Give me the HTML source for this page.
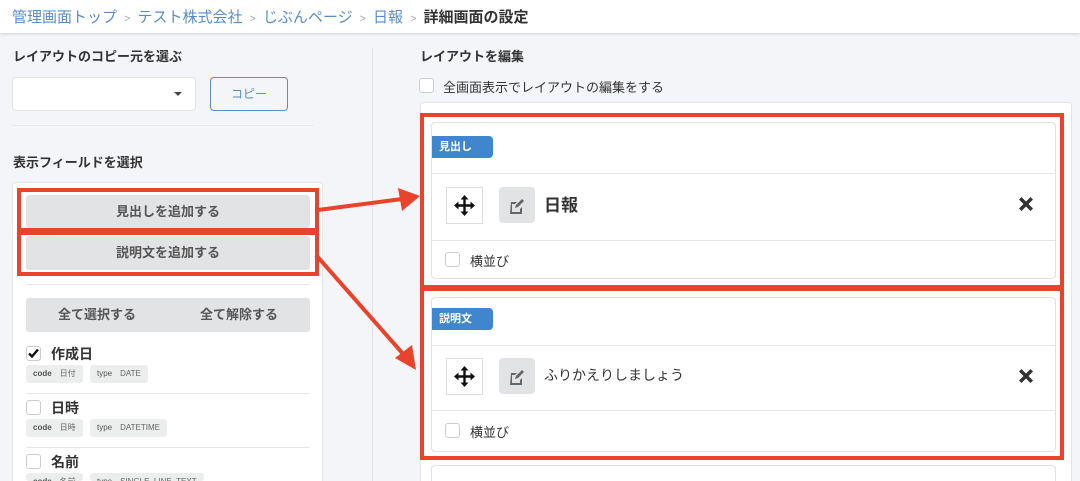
<!DOCTYPE html>
<html style="overflow:hidden;height:481px"><head><meta charset="utf-8">
<style>
*{box-sizing:border-box;margin:0;padding:0}
html,body{overflow:hidden}
body{width:1080px;height:481px;overflow:hidden;background:#f4f5f8;font-family:"Liberation Sans","Noto Sans CJK JP",sans-serif;color:#333;position:relative}
.a{position:absolute}
.hdr{left:0;top:0;width:1080px;height:33px;background:#fff;box-shadow:0 1px 3px rgba(0,0,0,.15)}
.bc{left:12px;top:6px;font-size:15px;color:#5b8cc6;white-space:nowrap}
.bc .s{color:#aaa;font-size:11px;margin:0 7px}
.bc b{color:#333}
.h{font-size:13px;font-weight:bold;color:#333}
.btn{background:#e2e3e5;border-radius:3px;font-size:13px;font-weight:bold;color:#555;text-align:center}
.red{border:4px solid #e8432b}
.cb{width:15px;height:15px;border:1px solid #ccc;border-radius:3px;background:#fff}
.tag{background:#eceded;border-radius:3px;font-size:8px;color:#555;height:18px;line-height:18px;padding:0 7px}
.tag i{font-style:normal;margin-left:8px;color:#666}
.sep{height:1px;background:#e5e6e8}
.card{background:#fff;border:1px solid #e0e0e0;border-radius:4px}
.badge{background:#3f86cc;color:#fff;font-size:11px;font-weight:bold;border-radius:0 4px 4px 0;line-height:22px;padding-left:7px}
.mv{width:37px;height:37px;border:1px solid #ddd;background:#fff}
.ed{width:36px;height:36px;background:#e2e3e5;border-radius:4px}
</style></head><body>
<div class="a hdr"></div>
<div class="a bc">管理画面トップ<span class="s">&gt;</span>テスト株式会社<span class="s">&gt;</span>じぶんページ<span class="s">&gt;</span>日報<span class="s">&gt;</span><b>詳細画面の設定</b></div>

<div class="a h" style="left:13px;top:46px">レイアウトのコピー元を選ぶ</div>
<div class="a" style="left:12px;top:77px;width:184px;height:34px;background:#fff;border:1px solid #e3e3e3;border-radius:4px"></div>
<div class="a" style="left:174px;top:92px;width:0;height:0;border-left:4px solid transparent;border-right:4px solid transparent;border-top:4px solid #444"></div>
<div class="a" style="left:210px;top:77px;width:78px;height:34px;border:1px solid #5b8cc6;border-radius:4px;color:#5b8cc6;font-size:12px;text-align:center;line-height:32px">コピー</div>
<div class="a sep" style="left:12px;top:125px;width:301px"></div>
<div class="a h" style="left:13px;top:152px">表示フィールドを選択</div>
<div class="a" style="left:12px;top:182px;width:311px;height:299px;background:#fff;border:1px solid #e5e5e5;border-bottom:none;border-radius:4px 4px 0 0"></div>
<div class="a btn" style="left:26px;top:195px;width:284px;height:33px;line-height:33px">見出しを追加する</div>
<div class="a btn" style="left:26px;top:236px;width:284px;height:34px;line-height:34px">説明文を追加する</div>
<div class="a red" style="left:17px;top:188px;width:302px;height:44px"></div>
<div class="a red" style="left:17px;top:231px;width:302px;height:45px"></div>
<div class="a sep" style="left:26px;top:284px;width:284px"></div>
<div class="a btn" style="left:26px;top:298px;width:284px;height:34px;line-height:34px;font-size:13px"><span style="position:absolute;left:32px">全て選択する</span><span style="position:absolute;left:174px">全て解除する</span></div>

<div class="a cb" style="left:26px;top:346px"><svg width="13" height="13" viewBox="0 0 13 13" style="position:absolute;left:0;top:0"><path d="M2 6.5l3 3 6-7" stroke="#111" stroke-width="2.4" fill="none"/></svg></div>
<div class="a" style="left:51px;top:344px;font-size:14px;font-weight:bold">作成日</div>
<div class="a tag" style="left:26px;top:365px"><b>code</b><i>日付</i></div>
<div class="a tag" style="left:90px;top:365px">type<i>DATE</i></div>
<div class="a sep" style="left:26px;top:393px;width:284px"></div>
<div class="a cb" style="left:26px;top:400px"></div>
<div class="a" style="left:51px;top:398px;font-size:14px;font-weight:bold">日時</div>
<div class="a tag" style="left:26px;top:419px"><b>code</b><i>日時</i></div>
<div class="a tag" style="left:90px;top:419px">type<i>DATETIME</i></div>
<div class="a sep" style="left:26px;top:447px;width:284px"></div>
<div class="a cb" style="left:26px;top:454px"></div>
<div class="a" style="left:51px;top:452px;font-size:14px;font-weight:bold">名前</div>
<div class="a tag" style="left:26px;top:473px;height:8px;overflow:hidden"><b>code</b><i>名前</i></div>
<div class="a tag" style="left:90px;top:473px;height:8px;overflow:hidden">type<i>SINGLE_LINE_TEXT</i></div>

<div class="a" style="left:372px;top:48px;width:1px;height:433px;background:#e3e4e6"></div>

<div class="a h" style="left:420px;top:46px">レイアウトを編集</div>
<div class="a cb" style="left:419px;top:78px"></div>
<div class="a" style="left:443px;top:77px;font-size:13px">全画面表示でレイアウトの編集をする</div>
<div class="a" style="left:420px;top:102px;width:652px;height:379px;background:#fff;border:1px solid #e5e5e5;border-bottom:none;border-radius:4px 4px 0 0"></div>

<div class="a card" style="left:431px;top:122px;width:625px;height:157px"></div>
<div class="a badge" style="left:432px;top:136px;width:61px">見出し</div>
<div class="a sep" style="left:432px;top:173px;width:623px"></div>
<div class="a mv" style="left:446px;top:187px"></div>
<div class="a ed" style="left:499px;top:187px"></div>
<div class="a" style="left:544px;top:191px;font-size:17px;font-weight:bold">日報</div>
<div class="a sep" style="left:432px;top:240px;width:623px"></div>
<div class="a cb" style="left:445px;top:252px"></div>
<div class="a" style="left:470px;top:251px;font-size:13px">横並び</div>

<div class="a card" style="left:431px;top:297px;width:625px;height:155px"></div>
<div class="a badge" style="left:432px;top:308px;width:61px">説明文</div>
<div class="a sep" style="left:432px;top:345px;width:623px"></div>
<div class="a mv" style="left:446px;top:358px"></div>
<div class="a ed" style="left:499px;top:358px"></div>
<div class="a" style="left:544px;top:365px;font-size:14px">ふりかえりしましょう</div>
<div class="a sep" style="left:432px;top:410px;width:623px"></div>
<div class="a cb" style="left:445px;top:423px"></div>
<div class="a" style="left:470px;top:422px;font-size:13px">横並び</div>
<div class="a" style="left:431px;top:465px;width:625px;height:16px;background:#fff;border:1px solid #e0e0e0;border-bottom:none;border-radius:4px 4px 0 0"></div>

<div class="a red" style="left:420px;top:113px;width:644px;height:176px"></div>
<div class="a red" style="left:420px;top:287px;width:644px;height:173px"></div>

<svg class="a" style="left:0;top:0" width="1080" height="481">
<defs>
<g id="mv"><path d="M0-7V7M-7 0H7" stroke="#111" stroke-width="2.4"/><path d="M0-10.5l-4 4.5h8zM0 10.5l-4-4.5h8zM-10.5 0l4.5-4v8zM10.5 0l-4.5-4v8z" fill="#111"/></g>
<g id="ed"><path d="M-6-4h6l-2 2h-3v8h8v-3l2-2v7h-12z" fill="#666"/><path d="M-2 2l1-3 6-6 2 2-6 6z" fill="#666"/></g>
<g id="x"><path d="M-7-4.5l2.5-2.5 4.5 4.5 4.5-4.5 2.5 2.5-4.5 4.5 4.5 4.5-2.5 2.5-4.5-4.5-4.5 4.5-2.5-2.5 4.5-4.5z" fill="#333"/></g>
</defs>
<use href="#mv" x="464.5" y="205.5"/><use href="#mv" x="464.5" y="376.5"/>
<use href="#ed" x="517" y="206"/><use href="#ed" x="517" y="377"/>
<use href="#x" x="1026" y="204"/><use href="#x" x="1026" y="376"/>
<path d="M318 210L402 199" stroke="#e8432b" stroke-width="4"/>
<path d="M420 196L398 188L402 211z" fill="#e8432b"/>
<path d="M316 255L404 355" stroke="#e8432b" stroke-width="4"/>
<path d="M416 370L395 358L412 345z" fill="#e8432b"/>
</svg>
</body></html>
